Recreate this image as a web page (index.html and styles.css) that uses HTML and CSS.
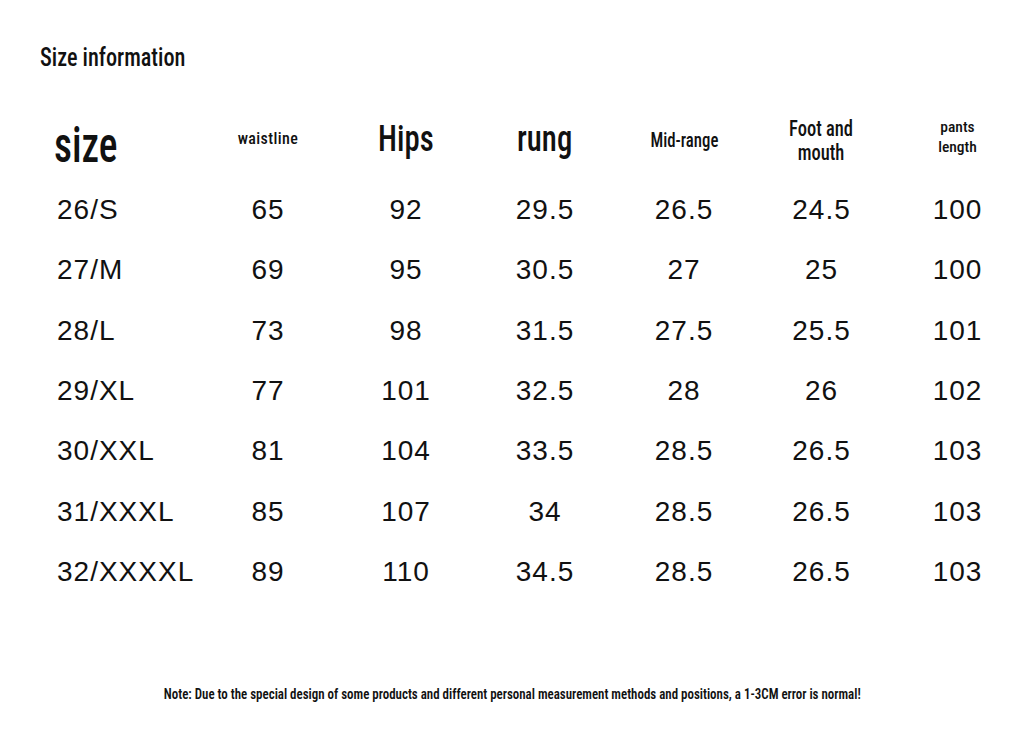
FILE: index.html
```html
<!DOCTYPE html>
<html>
<head>
<meta charset="utf-8">
<link rel="stylesheet" href="styles.css">
</head>
<body>
<main class="page">
  <h1 class="title"><span class="narrow">Size information</span></h1>
  <div class="table">
    <div class="row head">
      <div class="cell first h-size"><span class="narrow">size</span></div>
      <div class="cell h-small"><span>waistline</span></div>
      <div class="cell h-big"><span class="narrow">Hips</span></div>
      <div class="cell h-big"><span class="narrow">rung</span></div>
      <div class="cell h-mid"><span class="narrow">Mid-range</span></div>
      <div class="cell h-foot"><span class="narrow">Foot and<br>mouth</span></div>
      <div class="cell h-pants"><span>pants<br>length</span></div>
    </div>
    <div class="row data"><div class="cell first">26/S</div><div class="cell">65</div><div class="cell">92</div><div class="cell">29.5</div><div class="cell">26.5</div><div class="cell">24.5</div><div class="cell">100</div></div>
    <div class="row data"><div class="cell first">27/M</div><div class="cell">69</div><div class="cell">95</div><div class="cell">30.5</div><div class="cell">27</div><div class="cell">25</div><div class="cell">100</div></div>
    <div class="row data"><div class="cell first">28/L</div><div class="cell">73</div><div class="cell">98</div><div class="cell">31.5</div><div class="cell">27.5</div><div class="cell">25.5</div><div class="cell">101</div></div>
    <div class="row data"><div class="cell first">29/XL</div><div class="cell">77</div><div class="cell">101</div><div class="cell">32.5</div><div class="cell">28</div><div class="cell">26</div><div class="cell">102</div></div>
    <div class="row data"><div class="cell first">30/XXL</div><div class="cell">81</div><div class="cell">104</div><div class="cell">33.5</div><div class="cell">28.5</div><div class="cell">26.5</div><div class="cell">103</div></div>
    <div class="row data"><div class="cell first">31/XXXL</div><div class="cell">85</div><div class="cell">107</div><div class="cell">34</div><div class="cell">28.5</div><div class="cell">26.5</div><div class="cell">103</div></div>
    <div class="row data"><div class="cell first">32/XXXXL</div><div class="cell">89</div><div class="cell">110</div><div class="cell">34.5</div><div class="cell">28.5</div><div class="cell">26.5</div><div class="cell">103</div></div>
  </div>
  <p class="note"><span class="narrow">Note: Due to the special design of some products and different personal measurement methods and positions, a 1-3CM error is normal!</span></p>
</main>
</body>
</html>
```
FILE: styles.css
```css
html, body {
  margin: 0;
  padding: 0;
  background: #ffffff;
  overflow: hidden;
}
.page {
  width: 1024px;
  height: 729px;
  color: #111111;
  display: flex;
  flex-direction: column;
}
.narrow {
  display: inline-block;
  transform-origin: center top;
}
.title {
  margin: 42px 0 0 40px;
  height: 30px;
  font-family: "Roboto Condensed", "DejaVu Sans", sans-serif;
  font-stretch: condensed;
  font-weight: 500;
  font-size: 26px;
  line-height: 30px;
  white-space: nowrap;
}
.title .narrow {
  transform-origin: left top;
  transform: scaleX(0.855);
}
.table {
  margin: 38px 0 0 57px;
  display: flex;
  flex-direction: column;
}
.row {
  display: grid;
  grid-template-columns: 142px 138px 138px 140px 138px 137px 135px;
}
.cell {
  text-align: center;
  white-space: nowrap;
}
.cell.first {
  text-align: left;
}
.head {
  height: 70px;
  align-items: start;
  font-family: "Roboto Condensed", "DejaVu Sans", sans-serif;
  font-stretch: condensed;
  font-weight: 500;
}
.h-size {
  font-size: 50px;
  line-height: 50px;
  padding-top: 9.6px;
  margin-left: -3px;
}
.h-size .narrow {
  transform-origin: left top;
  transform: scaleX(0.79);
}
.h-small {
  font-size: 16px;
  line-height: 16px;
  padding-top: 20.5px;
  letter-spacing: 0.4px;
}
.h-big {
  font-size: 37.5px;
  line-height: 37.5px;
  padding-top: 10.4px;
}
.h-big .narrow {
  transform: scaleX(0.82);
}
.h-mid {
  font-size: 20px;
  line-height: 20px;
  padding-top: 19.9px;
}
.h-mid .narrow {
  transform: scaleX(0.84);
}
.h-foot {
  font-size: 22px;
  line-height: 24.5px;
  padding-top: 6.9px;
}
.h-foot .narrow {
  transform: scaleX(0.84);
}
.h-pants {
  font-size: 15.5px;
  line-height: 20px;
  padding-top: 7.4px;
}
.data {
  height: 60.3px;
  align-items: center;
  font-family: "Liberation Sans", Arial, sans-serif;
  font-size: 28px;
  letter-spacing: 1px;
}
.note {
  margin: 82px 0 0 0;
  text-align: center;
  font-family: "Roboto Condensed", "DejaVu Sans", sans-serif;
  font-stretch: condensed;
  font-weight: 600;
  font-size: 15.5px;
  line-height: 20px;
  white-space: nowrap;
}
.note .narrow {
  transform: scaleX(0.835);
}
```
